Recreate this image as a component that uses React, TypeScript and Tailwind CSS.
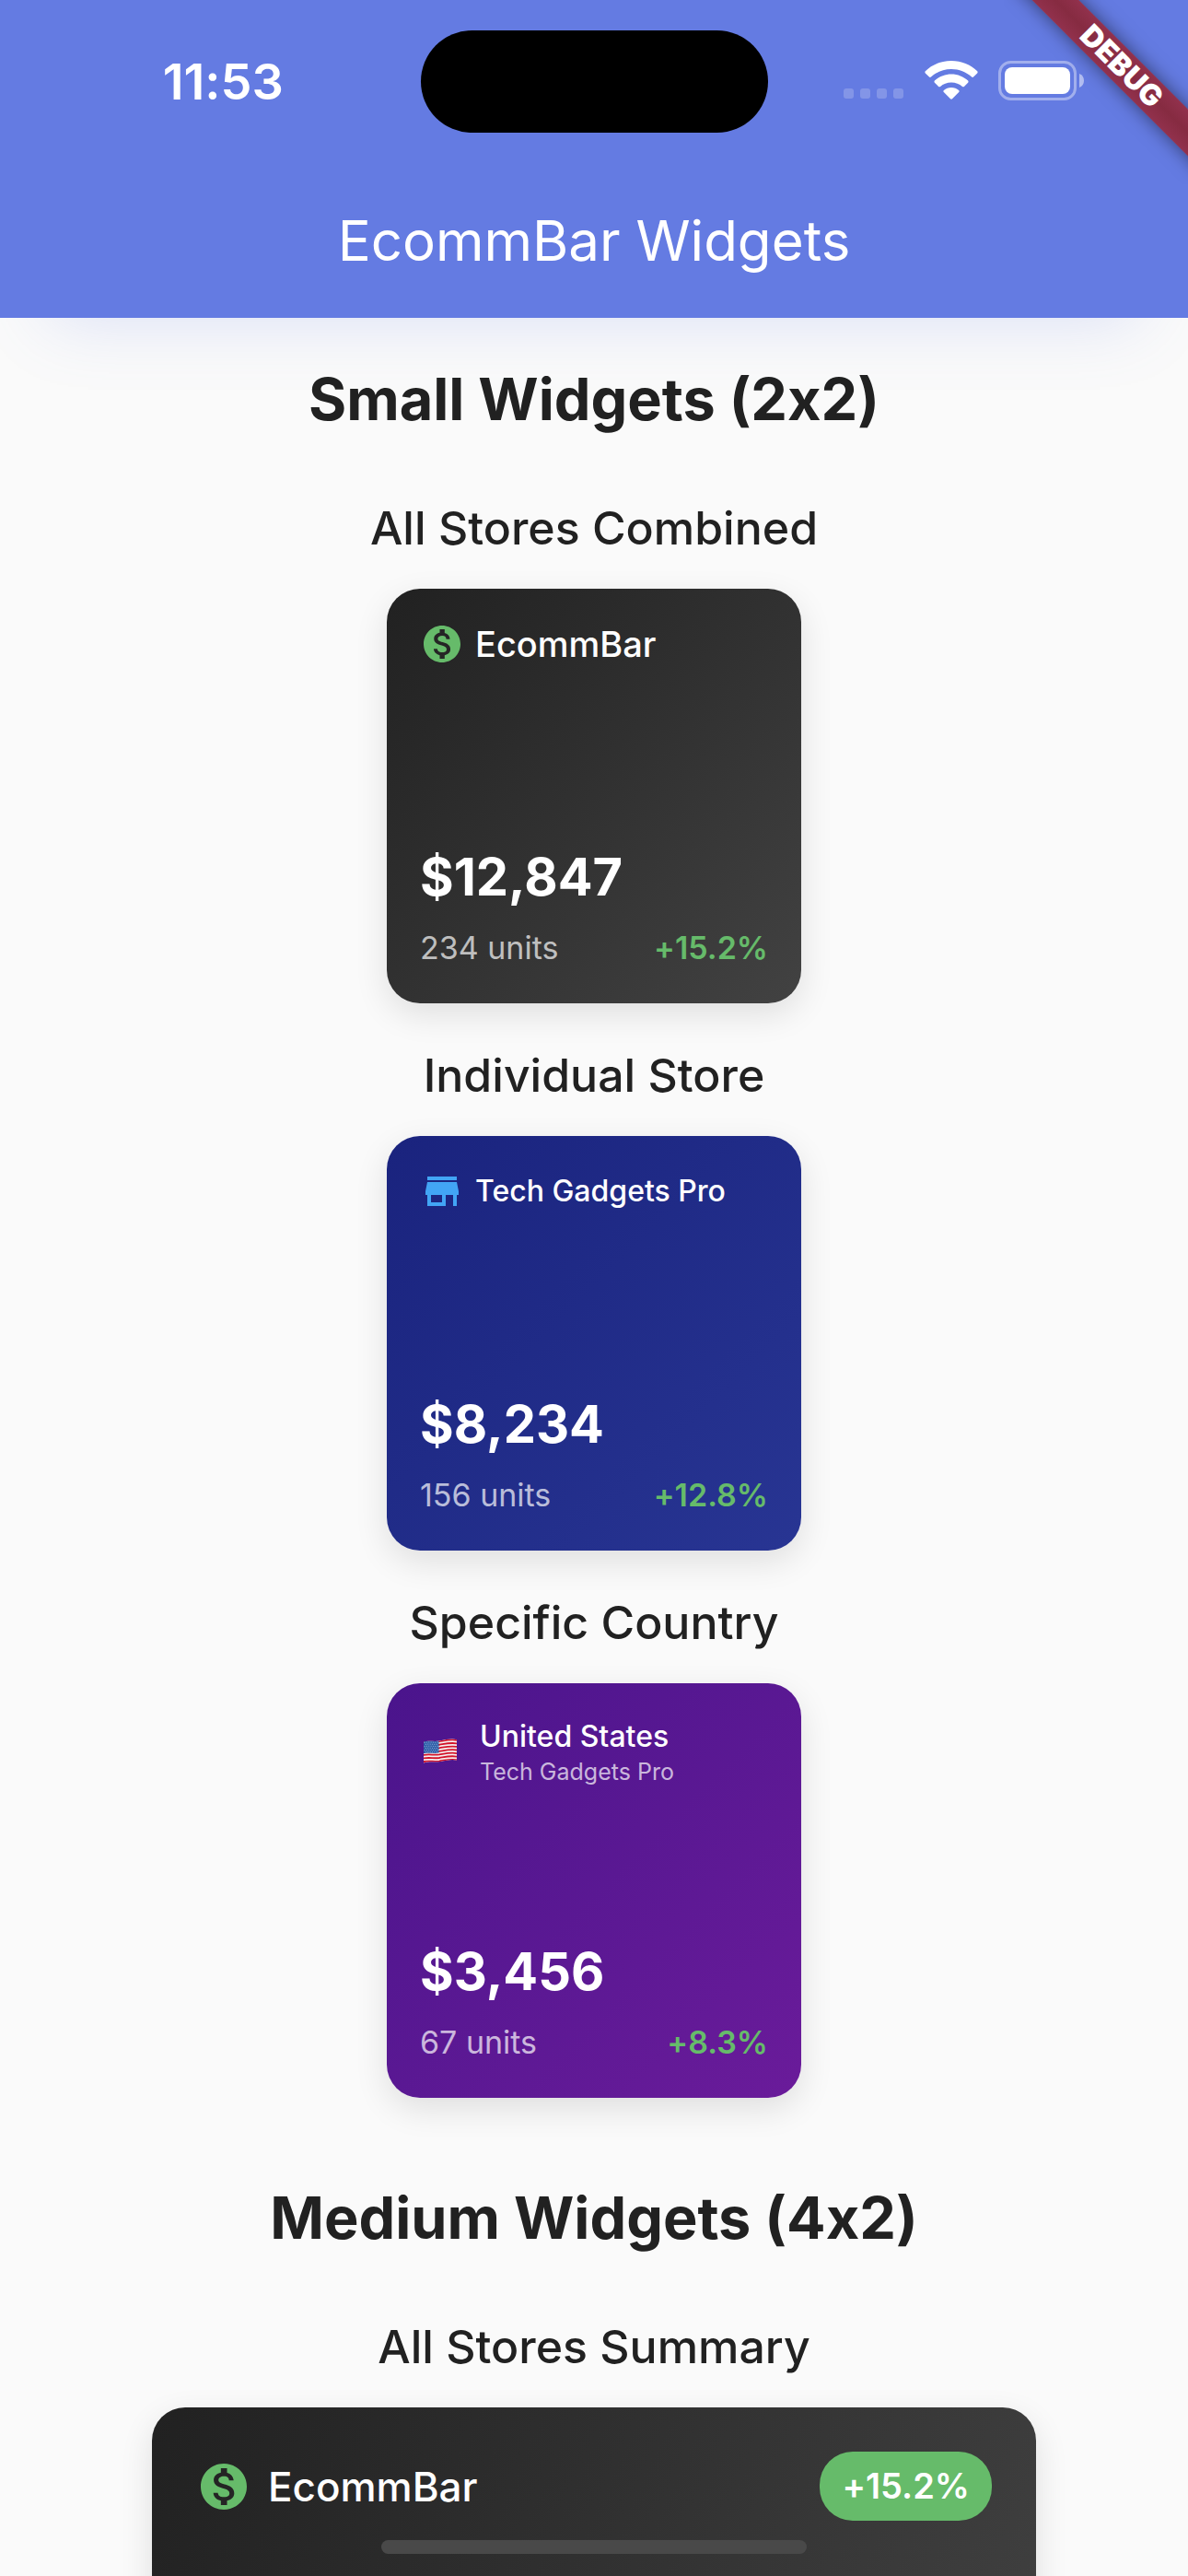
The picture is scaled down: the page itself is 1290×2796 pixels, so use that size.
import React from "react";
import { MdMonetizationOn, MdStore } from "react-icons/md";

function UsFlag() {
  const stripes = [0, 2, 4, 6, 8, 10, 12];
  const canton = [0, 1, 2, 3, 4, 5];
  return (
    <svg viewBox="0 0 38 28" className="h-7 w-[38px]" role="img" aria-label="United States flag">
      <defs>
        <clipPath id="wave">
          <path d="M1 3.4C8 1.800 11 3.600 18 2.600C26 1.200 31 -.2 37 1.200V23.600C31 22.200 26 23.800 19 25C12 26 8 24.400 1 26.400Z" />
        </clipPath>
      </defs>
      <g clipPath="url(#wave)">
        <rect width="38" height="28" fill="#f4f1f1" />
        {stripes.map((i) => (
          <path
            key={i}
            d="M0 3.800C8 2.200 11 4.200 18 3.200C26 1.800 31 .4 38 2"
            transform={`translate(0 ${i * 1.78})`}
            stroke="#d3142a"
            strokeWidth="1.8"
            fill="none"
          />
        ))}
        <path d="M0 2C8 .3 12 3 17.500 2V15.600C12 16.600 7 14.800 0 16.600Z" fill="#2f5fa8" />
        {canton.map((i) => (
          <path
            key={i}
            d="M1.500 4.600C7 3.200 11 4.800 17 4"
            transform={`translate(0 ${i * 2.1})`}
            stroke="#a9c3e6"
            strokeWidth=".8"
            strokeDasharray="1 1.4"
            strokeDashoffset={i % 2}
            fill="none"
          />
        ))}
      </g>
    </svg>
  );
}

function Wifi() {
  return (
    <svg viewBox="0 0 58 42" className="h-[42px] w-[58px]" fill="white" role="img" aria-label="Wi-Fi">
      <path d="M29 0C18 0 8 4.200 .8 11.300C.2 11.900 .2 12.800 .8 13.400L5 17.600C5.500 18.100 6.300 18.100 6.900 17.600C12.800 12 20.500 9 29 9S45.200 12 51.100 17.600C51.700 18.100 52.500 18.100 53 17.600L57.200 13.400C57.800 12.800 57.800 11.900 57.200 11.300C50 4.200 40 0 29 0Z" />
      <path d="M29 14.500C22 14.500 15.600 17.200 10.900 21.600C10.300 22.200 10.300 23.100 10.900 23.700L15.100 27.900C15.600 28.400 16.400 28.400 17 27.900C20.200 25.100 24.400 23.400 29 23.400S37.800 25.100 41 27.900C41.600 28.400 42.400 28.400 42.900 27.900L47.100 23.700C47.700 23.100 47.700 22.200 47.100 21.600C42.400 17.200 36 14.500 29 14.500Z" />
      <path d="M29 29C25.900 29 23.100 30.100 20.900 31.900C20.200 32.500 20.200 33.400 20.800 34L28 41.300C28.600 41.900 29.400 41.900 30 41.300L37.200 34C37.800 33.400 37.800 32.500 37.100 31.900C34.900 30.100 32.100 29 29 29Z" />
    </svg>
  );
}

function Battery() {
  return (
    <svg viewBox="0 0 94 43" className="h-[43px] w-[94px]" role="img" aria-label="Battery full">
      <rect x="1.500" y="1.500" width="82" height="40" rx="12" fill="none" stroke="white" strokeOpacity=".4" strokeWidth="3" />
      <rect x="7" y="7" width="71" height="29" rx="8" fill="white" />
      <path d="M88 14C91.500 15.300 93 18 93 21.500S91.500 27.700 88 29Z" fill="white" fillOpacity=".5" />
    </svg>
  );
}

function StatusBar() {
  return (
    <div className="grid h-[177px] grid-cols-[1fr_377px_1fr] items-start pt-[33px]">
      <div className="flex h-[111px] items-center justify-center pl-7">
        <time className="text-[54px] leading-[60px] font-semibold">11:53</time>
      </div>
      <div className="h-[111px] rounded-full bg-black" />
      <div className="flex h-[108px] items-center pl-[82px]">
        <div className="mr-[23px] flex gap-[7px] self-end pb-[34px]">
          <span className="size-[11px] rounded-[3px] bg-white/20" />
          <span className="size-[11px] rounded-[3px] bg-white/20" />
          <span className="size-[11px] rounded-[3px] bg-white/20" />
          <span className="size-[11px] rounded-[3px] bg-white/20" />
        </div>
        <div className="mr-[22px]">
          <Wifi />
        </div>
        <Battery />
      </div>
    </div>
  );
}

function DebugBanner() {
  return (
    <div className="absolute top-0 right-0 size-[200px] overflow-hidden" aria-hidden="true">
      <div className="absolute top-[54px] -right-[78px] flex h-9 w-[300px] rotate-45 items-center justify-center bg-linear-to-b from-[#92314d] via-[#862b41] to-[#92314d] text-[32px] leading-9 font-black text-white shadow-[0_0_20px_rgba(0,0,0,0.5)]">
        DEBUG
      </div>
    </div>
  );
}

type SmallProps = {
  background: string;
  header: React.ReactNode;
  amount: string;
  units: string;
  change: string;
};

function SmallWidget({ background, header, amount, units, change }: SmallProps) {
  return (
    <article
      className={`mx-auto flex h-[450px] w-[450px] flex-col justify-between rounded-[36px] p-9 shadow-[0_12px_36px_rgba(0,0,0,0.11)] ${background}`}
    >
      <div className="flex items-center">{header}</div>
      <div>
        <p className="text-[56px] leading-[66px] font-bold text-white">{amount}</p>
        <div className="mt-5 flex items-center justify-between text-[34px] leading-[48px]">
          <span className="text-white/70">{units}</span>
          <span className="font-semibold text-[#66bb6a]">{change}</span>
        </div>
      </div>
    </article>
  );
}

function SectionTitle({ children }: { children: React.ReactNode }) {
  return <h2 className="pb-[22px] text-center text-[63px] leading-[80px] font-bold">{children}</h2>;
}

function WidgetTitle({ children }: { children: React.ReactNode }) {
  return <h3 className="pt-12 pb-9 text-center text-[50px] leading-[60px] font-medium">{children}</h3>;
}

export default function App() {
  return (
    <div className="relative h-screen overflow-hidden bg-[#fafafa] font-['Inter',sans-serif] text-[#212121] [font-feature-settings:'calt'_0]">
      <header className="relative h-[345px] bg-[#647be2] text-white shadow-[0_54px_72px_-54px_rgba(102,126,234,0.22)]">
        <StatusBar />
        <h1 className="text-center text-[60px] leading-[168px]">EcommBar Widgets</h1>
      </header>
      <DebugBanner />

      <main>
        <section className="pt-12 pb-[42px]">
          <SectionTitle>Small Widgets (2x2)</SectionTitle>

          <WidgetTitle>All Stores Combined</WidgetTitle>
          <SmallWidget
            background="bg-linear-to-br from-[#212121] to-[#424242]"
            header={
              <>
                <MdMonetizationOn className="mr-3 size-12 text-[#66bb6a]" />
                <span className="text-[38px] leading-[48px] font-medium text-white">EcommBar</span>
              </>
            }
            amount="$12,847"
            units="234 units"
            change="+15.2%"
          />

          <WidgetTitle>Individual Store</WidgetTitle>
          <SmallWidget
            background="bg-linear-to-br from-[#1a237e] to-[#283593]"
            header={
              <>
                <MdStore className="mr-3 size-12 text-[#42a5f5]" />
                <span className="text-[32px] leading-[48px] font-medium text-white">Tech Gadgets Pro</span>
              </>
            }
            amount="$8,234"
            units="156 units"
            change="+12.8%"
          />

          <WidgetTitle>Specific Country</WidgetTitle>
          <SmallWidget
            background="bg-linear-to-br from-[#4a148c] to-[#6a1b9a]"
            header={
              <>
                <span className="mr-6 ml-[3px]">
                  <UsFlag />
                </span>
                <span className="flex flex-col">
                  <span className="text-[32px] leading-[44px] font-medium text-white">United States</span>
                  <span className="text-[25px] leading-8 text-white/70">Tech Gadgets Pro</span>
                </span>
              </>
            }
            amount="$3,456"
            units="67 units"
            change="+8.3%"
          />
        </section>

        <section className="pt-12">
          <SectionTitle>Medium Widgets (4x2)</SectionTitle>
          <WidgetTitle>All Stores Summary</WidgetTitle>
          <article className="mx-auto min-h-[450px] w-full max-w-[960px] rounded-[36px] bg-[linear-gradient(115deg,#212121,#424242)] p-12 shadow-[0_12px_36px_rgba(0,0,0,0.11)]">
            <div className="flex items-center justify-between">
              <div className="flex items-center gap-[18px]">
                <MdMonetizationOn className="size-[60px] text-[#66bb6a]" />
                <span className="text-[44px] leading-[60px] font-medium text-white">EcommBar</span>
              </div>
              <span className="rounded-[36px] bg-[#66bb6a] px-6 text-[38px] leading-[75px] font-semibold text-white">
                +15.2%
              </span>
            </div>
          </article>
        </section>
      </main>

      <div className="absolute bottom-6 left-1/2 h-[15px] w-[462px] -translate-x-1/2 rounded-full bg-[#494949]" />
    </div>
  );
}
